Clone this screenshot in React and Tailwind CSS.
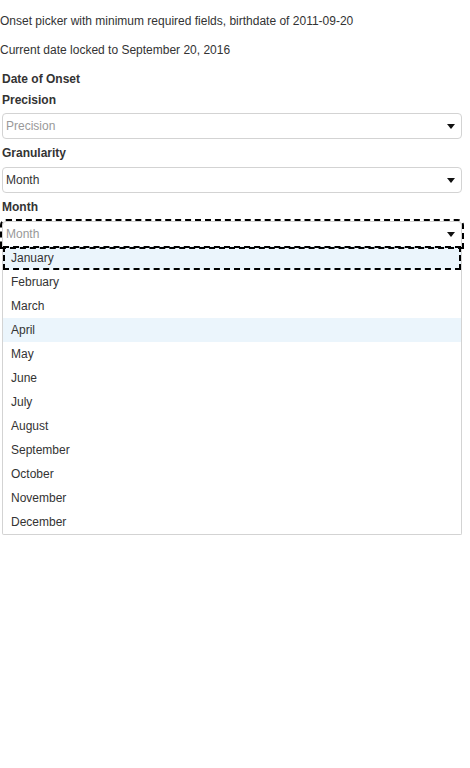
const months = [
  "January",
  "February",
  "March",
  "April",
  "May",
  "June",
  "July",
  "August",
  "September",
  "October",
  "November",
  "December",
];

function Caret() {
  return (
    <svg width="8" height="5" viewBox="0 0 8 5" className="shrink-0">
      <path d="M0 0 L8 0 L4 5 Z" fill="#111" />
    </svg>
  );
}

function SelectBox({ value, placeholder, focused }) {
  return (
    <div
      className={
        "h-[26px] w-full flex items-center justify-between pl-[3px] pr-[6px] bg-white border border-[#d3d3d3] rounded-[4px] " +
        (focused ? "outline-2 outline-dashed outline-black rounded-b-none" : "")
      }
    >
      <span className={value ? "text-[#333]" : "text-[#999]"}>
        {value || placeholder}
      </span>
      <Caret />
    </div>
  );
}

export default function App() {
  return (
    <div
      className="min-h-screen bg-white text-[12px] text-[#333] pt-px"
      style={{ fontFamily: '"Liberation Sans", Arial, sans-serif' }}
    >
      <p className="mt-3 mb-3 leading-[17px]">
        Onset picker with minimum required fields, birthdate of 2011-09-20
      </p>
      <p className="my-3 leading-[17px]">
        Current date locked to September 20, 2016
      </p>

      <div className="ml-[2px] w-[460px]">
        <div className="font-bold leading-[17px] h-[21px]">Date of Onset</div>

        {/* Precision */}
        <div className="font-bold leading-[17px] h-[17px] mb-[4px]">
          Precision
        </div>
        <SelectBox placeholder="Precision" />

        {/* Granularity */}
        <div className="font-bold leading-[17px] h-[17px] mt-[6px] mb-[5px]">
          Granularity
        </div>
        <SelectBox value="Month" placeholder="Granularity" />

        {/* Month */}
        <div className="font-bold leading-[17px] h-[17px] mt-[6px] mb-[5px]">
          Month
        </div>
        <SelectBox placeholder="Month" focused />

        <div className="-mt-px bg-white border border-t-0 border-[#d3d3d3] rounded-b-[2px]">
          {months.map((m, i) => (
            <div
              key={m}
              className={
                "h-[24px] flex items-center pl-[8px] text-[#333] " +
                (i === 0
                  ? "bg-[#ebf5fc] outline-2 outline-dashed outline-black -outline-offset-2"
                  : i === 3
                  ? "bg-[#ebf5fc]"
                  : "")
              }
            >
              {m}
            </div>
          ))}
        </div>
      </div>
    </div>
  );
}
